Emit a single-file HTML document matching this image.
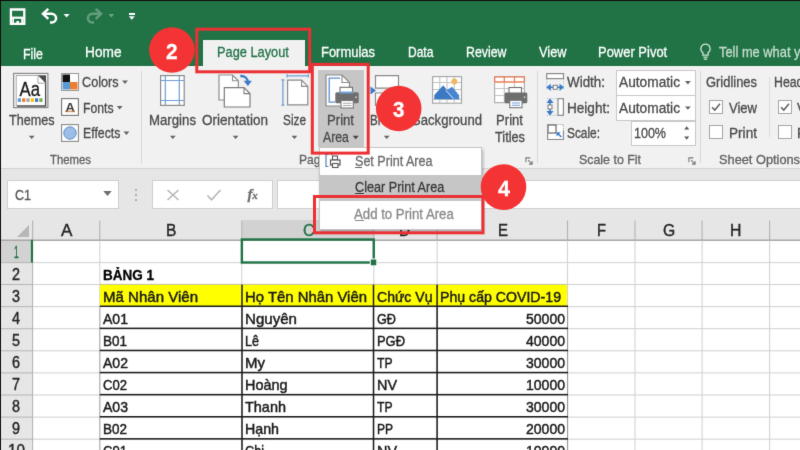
<!DOCTYPE html>
<html lang="vi">
<head>
<meta charset="utf-8">
<title>Excel - Add to Print Area</title>
<style>
html,body{margin:0;padding:0}
body{width:800px;height:450px;overflow:hidden;position:relative;background:#fff;font-family:"Liberation Sans",sans-serif}
#app{position:absolute;left:0;top:0;width:800px;height:450px;overflow:hidden;background:#fff;filter:url(#bl)}
.t{position:absolute;white-space:pre;transform-origin:0 50%;-webkit-text-stroke:0.3px}
.a{position:absolute}
.vl{position:absolute;width:1px;background:#d9d9d9}
.hl{position:absolute;height:1px;background:#d9d9d9}
.dv{position:absolute;width:1.2px;background:#303030}
.dh{position:absolute;height:1.2px;background:#303030}
.sep{position:absolute;width:1px;background:#d6d6d6}
.car{position:absolute;width:0;height:0;margin-left:0.8px;border-left:3px solid transparent;border-right:3px solid transparent;border-top:3.5px solid #666}
.box{position:absolute;background:#fff;border:1px solid #c8c8c8;box-sizing:border-box}
.chk{position:absolute;width:14px;height:14px;background:#fff;border:1px solid #a6a6a6;box-sizing:border-box}
.rr{position:absolute;border:3px solid #ec3034;box-sizing:border-box}
.circ{position:absolute;width:45.6px;height:45.6px;border-radius:50%;background:#f43434}
svg{position:absolute;overflow:visible}
</style>
</head>
<body>
<svg width="0" height="0" style="position:absolute"><defs><filter id="bl" x="0" y="0" width="100%" height="100%" color-interpolation-filters="sRGB"><feConvolveMatrix order="3" kernelMatrix="0.0081 0.0738 0.0081 0.0738 0.6724 0.0738 0.0081 0.0738 0.0081" divisor="1" edgeMode="duplicate" preserveAlpha="true"/></filter></defs></svg>
<div id="app">

<!-- ===== title bar + tabs ===== -->
<div class="a" style="left:0;top:0;width:800px;height:66px;background:#217346"></div>
<div class="a" style="left:203px;top:40px;width:102px;height:27px;background:#f1f1f1"></div>

<!-- quick access icons -->
<svg style="left:9px;top:8px" width="18" height="18" viewBox="0 0 18 18">
  <path d="M1.9 1.5h13.4v14.4h-13.400z" fill="none" stroke="#fff" stroke-width="2.3"/>
  <path d="M3 8.600h11.500v2.200h-11.500z" fill="#fff"/>
  <path d="M3.300 10h1.700v5h-1.700zM12.200 10h1.700v5h-1.700z" fill="#fff"/>
  <rect x="7.400" y="13" width="2.600" height="3" fill="#fff"/>
</svg>
<svg style="left:40px;top:7px" width="20" height="18" viewBox="0 0 20 18">
  <path d="M3.500 6.800h8a4.600 4.600 0 0 1 4.600 4.400a4.300 4.300 0 0 1-4.300 4.300h-1.800" fill="none" stroke="#fff" stroke-width="2.500"/>
  <path d="M8.300 1.800L3 6.800l5.300 5" fill="none" stroke="#fff" stroke-width="2.500"/>
</svg>
<svg style="left:83.500px;top:7px;opacity:.3" width="20" height="18" viewBox="0 0 20 18">
  <path d="M16.500 6.800h-8a4.600 4.600 0 0 0-4.600 4.400a4.300 4.300 0 0 0 4.300 4.300h1.800" fill="none" stroke="#fff" stroke-width="2.500"/>
  <path d="M11.700 1.800l5.300 5l-5.300 5" fill="none" stroke="#fff" stroke-width="2.500"/>
</svg>
<div class="a" style="left:128.800px;top:13px;width:6.500px;height:1.700px;background:#fff"></div>

<!-- bulb -->
<svg style="left:699px;top:43px" width="13" height="18" viewBox="0 0 13 18">
  <path d="M6.5 1.2a4.6 4.6 0 0 0-2.6 8.4v2.6h5.2v-2.6a4.6 4.6 0 0 0-2.6-8.4z" fill="none" stroke="#cfe3d6" stroke-width="1.3"/>
  <path d="M4.3 14.2h4.4M4.8 16.2h3.4" stroke="#cfe3d6" stroke-width="1.2"/>
</svg>

<!-- ===== ribbon ===== -->
<div class="a" style="left:0;top:66px;width:800px;height:103px;background:#f1f1f1"></div>
<div class="a" style="left:0;top:168px;width:800px;height:1px;background:#d2d2d2"></div>
<div class="a" style="left:0;top:169px;width:800px;height:52px;background:#e6e6e6"></div>

<!-- print area pressed bg -->
<div class="a" style="left:318.200px;top:69.800px;width:46.300px;height:77.500px;background:#c6c6c6"></div>

<!-- separators -->
<div class="sep" style="left:141.200px;top:71px;height:92px"></div>
<div class="sep" style="left:537px;top:71px;height:92px"></div>
<div class="sep" style="left:700px;top:71px;height:92px"></div>
<div class="sep" style="left:769px;top:77px;height:60px;background:#dcdcdc"></div>

<!-- Themes icon -->
<svg style="left:13px;top:73px" width="36" height="35" viewBox="0 0 36 35">
  <rect x="0.600" y="0.400" width="34.300" height="34.200" fill="#f4f4f4" stroke="#8a8a8a" stroke-width="1.200"/>
  <rect x="3.200" y="2.600" width="29.300" height="30" fill="#fff" stroke="#9a9a9a" stroke-width="0.800"/>
  <path d="M32.600 8v25.200H4" fill="none" stroke="#4a4a4a" stroke-width="1.300"/>
  <path d="M25 2.400h8v8z" fill="#4a4a4a"/>
  <path d="M25 2.600v7.600h7.800" fill="none" stroke="#9a9a9a" stroke-width=".9"/>
  <text x="6.600" y="22.600" font-family="Liberation Sans, sans-serif" font-size="19.500" fill="#1a1a1a" stroke="#1a1a1a" stroke-width=".3" textLength="20.500" lengthAdjust="spacingAndGlyphs">Aa</text>
  <rect x="4.800" y="25.300" width="3.200" height="3.600" fill="#5b9bd5"/>
  <rect x="9.100" y="25.300" width="3.200" height="3.600" fill="#ed7d31"/>
  <rect x="13.400" y="25.300" width="3.200" height="3.600" fill="#a5a5a5"/>
  <rect x="17.700" y="25.300" width="3.200" height="3.600" fill="#ffc000"/>
  <rect x="22" y="25.300" width="3.200" height="3.600" fill="#4472c4"/>
  <rect x="26.300" y="25.300" width="3.200" height="3.600" fill="#70ad47"/>
</svg>
<!-- Colors icon -->
<svg style="left:61px;top:73px" width="18" height="18" viewBox="0 0 18 18">
  <rect x="0.5" y="0.5" width="17" height="17" fill="#fff" stroke="#9a9a9a"/>
  <rect x="1.5" y="1.5" width="7.5" height="7.5" fill="#111"/>
  <rect x="9" y="1.5" width="7.5" height="7.5" fill="#fff"/>
  <rect x="1.5" y="9" width="7.5" height="7.5" fill="#5b9bd5"/>
  <rect x="9" y="9" width="7.5" height="7.5" fill="#ed7d31"/>
</svg>
<!-- Fonts icon -->
<svg style="left:61px;top:98px" width="18" height="18" viewBox="0 0 18 18">
  <rect x="0.6" y="0.6" width="16.8" height="16.8" fill="#fff" stroke="#777" stroke-width="1.1"/>
  <text x="4.2" y="14.3" font-family="Liberation Sans, sans-serif" font-size="13.5" font-weight="bold" fill="#3a3a3a">A</text>
  <rect x="4" y="12.6" width="10" height="1.6" fill="#c8793c" opacity=".75"/>
</svg>
<!-- Effects icon -->
<svg style="left:61px;top:124px" width="18" height="18" viewBox="0 0 18 18">
  <rect x="0.6" y="0.6" width="16.8" height="16.8" fill="#fff" stroke="#8a8a8a" stroke-width="1.1"/>
  <circle cx="9" cy="9" r="6.2" fill="#9dbde6" stroke="#5b8fd0" stroke-width="1"/>
</svg>
<!-- Margins icon -->
<svg style="left:160px;top:75px" width="25" height="31" viewBox="0 0 25 31">
  <rect x="0.6" y="0.6" width="23.6" height="29.8" fill="#fff" stroke="#8a8a8a" stroke-width="1.2"/>
  <path d="M5.3 1v29M19.3 1v29M1 5.5h23M1 25.5h23" stroke="#6f9fd8" stroke-width="1.2" fill="none"/>
</svg>
<!-- Orientation icon -->
<svg style="left:218px;top:73.600px" width="34" height="35" viewBox="0 0 34 35">
  <path d="M1 1h13.500l5.800 5.800v19.200H1z" fill="#fff" stroke="#8e8e8e" stroke-width="1.200"/>
  <path d="M14.500 1v5.800h5.800" fill="none" stroke="#8e8e8e" stroke-width="1.100"/>
  <path d="M6.300 13.600h19.700l6 6v13.400H6.300z" fill="#fff" stroke="#7c7c7c" stroke-width="1.200"/>
  <path d="M26 13.600v6h6" fill="none" stroke="#7c7c7c" stroke-width="1.100"/>
  <path d="M22.300 2c4.800-.2 7.800 2.600 7.600 7" fill="none" stroke="#3a7bc8" stroke-width="2.300"/>
  <path d="M25.600 6.800l4.300 5.200l4-5.200z" fill="#3a7bc8"/>
</svg>
<!-- Size icon -->
<svg style="left:280.600px;top:73.800px" width="28" height="33" viewBox="0 0 28 33">
  <path d="M6.600 6.200h14l6.200 6.200v18.400h-20.200z" fill="#fff" stroke="#8a8a8a" stroke-width="1.200"/>
  <path d="M20.600 6.200v6.200h6.200" fill="none" stroke="#8a8a8a" stroke-width="1.100"/>
  <path d="M6 1.900h21.300M6 .3v3.200M27.300 .3v3.200" stroke="#6f9fd8" stroke-width="1.300" fill="none"/>
  <path d="M1.900 5.800v25.400M.3 5.800h3.200M.3 31.200h3.200" stroke="#6f9fd8" stroke-width="1.300" fill="none"/>
</svg>
<!-- Print Area icon -->
<svg style="left:325px;top:74px" width="35" height="36" viewBox="0 0 35 36">
  <path d="M1 1h16l7.5 7.5v23.5H1z" fill="#fff" stroke="#8a8a8a" stroke-width="1.2"/>
  <path d="M17 1v7.5h7.5" fill="none" stroke="#8a8a8a" stroke-width="1.1"/>
  <path d="M15 4.200H4.200v24H10" fill="none" stroke="#5b8fd0" stroke-width="1.300"/>
  <rect x="15" y="13.300" width="12.500" height="6" fill="#fff" stroke="#707070" stroke-width="1.1"/>
  <rect x="10.300" y="18.200" width="23.400" height="11" rx="1.500" fill="#6e6e6e"/>
  <rect x="14.500" y="17.600" width="13.500" height="2" fill="#6f9fd8"/>
  <rect x="16" y="26.500" width="12.300" height="7.500" fill="#fff" stroke="#777" stroke-width="1.1"/>
  <path d="M18 29.300h8.500M18 31.500h8.500" stroke="#aaa" stroke-width="1"/>
  <rect x="30.300" y="22.500" width="1.500" height="1.500" fill="#ddd"/>
</svg>
<!-- Breaks icon -->
<svg style="left:370px;top:75px" width="30" height="31" viewBox="0 0 30 31">
  <path d="M5.5 0.6h23v12.5h-23z" fill="#fff" stroke="#8a8a8a" stroke-width="1.2"/>
  <path d="M5.5 18h23v12.4h-23z" fill="#fff" stroke="#8a8a8a" stroke-width="1.2"/>
  <path d="M0.5 11.5l5.5 4l-5.5 4z" fill="#3a7bc8"/>
</svg>
<!-- Background icon -->
<svg style="left:432.300px;top:76.400px" width="30" height="28" viewBox="0 0 30 28">
  <rect x="0.600" y="0.600" width="28.900" height="26.600" fill="#fff" stroke="#a8a8a8" stroke-width="1.200"/>
  <path d="M1 6.500h28M1 13.500h28M1 23.400h28M7.800 1v26M15 1v26M22.300 1v26" stroke="#c4c4c4" stroke-width="1.100" fill="none"/>
  <circle cx="22.300" cy="5.400" r="3" fill="#f0b862"/>
  <path d="M2.300 23.200v-4.200l9-9.800l10.200 14z" fill="#3b79c4"/>
  <path d="M14 14.500l6.200-3.800l6.900 8.600v3.900h-7z" fill="#4a86d0"/>
  <path d="M13.800 14.300l7.500 8.300" stroke="#e8eef7" stroke-width=".9" fill="none"/>
</svg>
<!-- Print Titles icon -->
<svg style="left:494px;top:76.200px" width="34" height="33" viewBox="0 0 34 33">
  <rect x="0.600" y="0.600" width="29.800" height="26" fill="#fff" stroke="#b0b0b0" stroke-width="1.200"/>
  <path d="M1 12.500h29.500M1 19.500h29.500M10.300 6v20.500M20.500 6v20.500" stroke="#c4c4c4" stroke-width="1.100" fill="none"/>
  <path d="M0.600 0.800h29.800M0.600 6h29.800M10.300 1v5M20.500 1v5M0.600 0.500v5.500M30.400 0.500v5.500" stroke="#e9805a" stroke-width="1.300" fill="none"/>
  <rect x="15" y="11.500" width="12.500" height="6" fill="#fff" stroke="#707070" stroke-width="1.100"/>
  <rect x="10.500" y="16.500" width="22.800" height="10.800" rx="1.500" fill="#6e6e6e"/>
  <rect x="15.800" y="24.300" width="12.200" height="7.400" fill="#fff" stroke="#777" stroke-width="1.100"/>
  <path d="M18 27h8M18 29.300h8" stroke="#6f9fd8" stroke-width="1.100"/>
  <rect x="29.800" y="20.500" width="1.500" height="1.500" fill="#ddd"/>
</svg>
<!-- Width icon -->
<svg style="left:546px;top:73px" width="19" height="19" viewBox="0 0 19 19">
  <rect x="0.700" y="0.600" width="16.800" height="5" fill="#fff" stroke="#8a8a8a" stroke-width="1.200"/>
  <path d="M0.700 6v11M17.500 6v11" stroke="#9db7d8" stroke-width="1" stroke-dasharray="1 1.300"/>
  <path d="M3 14.300h12.500" stroke="#3a7bc8" stroke-width="1.600"/>
  <path d="M0.300 14.300l4.500-3.600v7.200zM18 14.300l-4.500-3.600v7.200z" fill="#3a7bc8"/>
  <rect x="7.200" y="12.300" width="4" height="4" fill="#fff" stroke="#7a7a7a" stroke-width="1"/>
</svg>
<!-- Height icon -->
<svg style="left:546px;top:98px" width="19" height="19" viewBox="0 0 19 19">
  <rect x="12" y="0.700" width="5.400" height="16.600" fill="#fff" stroke="#8a8a8a" stroke-width="1.200"/>
  <path d="M1 0.700h10.500M1 17.300h10.500" stroke="#9db7d8" stroke-width="1" stroke-dasharray="1 1.300"/>
  <path d="M4 3v12" stroke="#3a7bc8" stroke-width="1.600"/>
  <path d="M4 0.500l-3.600 4.500h7.200zM4 17.600l-3.600-4.500h7.200z" fill="#3a7bc8"/>
  <rect x="2" y="7" width="4" height="4" fill="#fff" stroke="#7a7a7a" stroke-width="1"/>
</svg>
<!-- Scale icon -->
<svg style="left:546.500px;top:123.800px" width="18" height="17" viewBox="0 0 18 17">
  <rect x="0.600" y="0.600" width="15.800" height="14.800" fill="#fff" stroke="#9a9a9a" stroke-width="1" stroke-dasharray="1.200 1.200"/>
  <path d="M0.600 9.500v6h15.800v-9" fill="none" stroke="#8a8a8a" stroke-width="1.100"/>
  <rect x="1" y="1" width="8" height="8" fill="#fff" stroke="#666" stroke-width="1.200"/>
  <path d="M14.300 13l-3.600-3.600" fill="none" stroke="#3a7bc8" stroke-width="1.500"/>
  <path d="M9.500 8.200h4.200l-4.200 4.200z" fill="#3a7bc8"/>
</svg>




<!-- combos -->
<div class="box" style="left:616px;top:70px;width:80px;height:26px"></div>
<div class="box" style="left:616px;top:95px;width:80px;height:26px"></div>
<div class="box" style="left:631px;top:121px;width:65px;height:25px"></div>

<!-- checkboxes -->
<div class="chk" style="left:709px;top:100px"></div>
<div class="chk" style="left:709px;top:125px"></div>
<div class="chk" style="left:778px;top:100px"></div>
<div class="chk" style="left:778px;top:125px"></div>
<svg style="left:709px;top:100px" width="14" height="14" viewBox="0 0 14 14"><path d="M3 7.200l2.800 2.900l5.200-6.300" fill="none" stroke="#606060" stroke-width="1.500"/></svg>
<svg style="left:778px;top:100px" width="14" height="14" viewBox="0 0 14 14"><path d="M3 7.200l2.800 2.900l5.200-6.300" fill="none" stroke="#606060" stroke-width="1.500"/></svg>

<!-- dialog launchers -->
<svg style="left:525px;top:156.500px" width="8" height="8" viewBox="0 0 9 9"><path d="M1 6V1h5" fill="none" stroke="#777" stroke-width="1.2"/><path d="M3.5 3.5L8 8M8 4.5V8H4.5" fill="none" stroke="#777" stroke-width="1.2"/></svg>
<svg style="left:688px;top:156.500px" width="8" height="8" viewBox="0 0 9 9"><path d="M1 6V1h5" fill="none" stroke="#777" stroke-width="1.2"/><path d="M3.5 3.5L8 8M8 4.5V8H4.5" fill="none" stroke="#777" stroke-width="1.2"/></svg>

<!-- ===== formula bar ===== -->
<div class="box" style="left:6.5px;top:180.3px;width:112px;height:28.4px;border-color:#cfcfcf"></div>
<div class="a" style="left:134.5px;top:189px;width:2px;height:2px;background:#b0b0b0"></div>
<div class="a" style="left:134.5px;top:194px;width:2px;height:2px;background:#b0b0b0"></div>
<div class="a" style="left:134.5px;top:199px;width:2px;height:2px;background:#b0b0b0"></div>
<div class="box" style="left:152.3px;top:180.3px;width:121.2px;height:28.4px;border-color:#cfcfcf"></div>
<div class="box" style="left:277.3px;top:180.3px;width:530px;height:28.4px;border-color:#cfcfcf"></div>
<svg style="left:166px;top:189px" width="14" height="12" viewBox="0 0 14 12"><path d="M1.5 1l11 10M12.5 1l-11 10" stroke="#b4b4b4" stroke-width="1.5" fill="none"/></svg>
<svg style="left:206px;top:189px" width="16" height="12" viewBox="0 0 16 12"><path d="M1.5 6.5l4 4.3L14.5 1" stroke="#b4b4b4" stroke-width="1.5" fill="none"/></svg>
<span class="t" style="left:247.500px;top:185px;font-family:'Liberation Serif',serif;font-style:italic;font-size:15px;line-height:19px;color:#707070;font-weight:bold;letter-spacing:-.3px">f<span style="font-size:11px">x</span></span>

<!-- ===== grid ===== -->
<div class="a" style="left:0;top:220px;width:800px;height:21px;background:#e6e6e6"></div>
<div class="a" style="left:0;top:241px;width:32px;height:209px;background:#e6e6e6"></div>
<div class="a" style="left:32.5px;top:241px;width:768px;height:209px;background:#fff"></div>
<!-- selected headers -->
<div class="a" style="left:241.800px;top:220px;width:132px;height:20px;background:#d2d2d2"></div>

<div class="a" style="left:0;top:241px;width:32px;height:22px;background:#d2d2d2"></div>

<svg style="left:16px;top:224px" width="14" height="14" viewBox="0 0 14 14"><path d="M13 1v12H1z" fill="#b7b7b7"/></svg>
<div class="a" style="left:0;top:239.600px;width:800px;height:1px;background:#ababab"></div>

<svg style="left:0;top:0" width="800" height="450" viewBox="0 0 800 450">
<rect x="99.25" y="240" width="1.1" height="210" fill="#d4d4d4"/>
<rect x="241.25" y="240" width="1.1" height="210" fill="#d4d4d4"/>
<rect x="373.25" y="240" width="1.1" height="210" fill="#d4d4d4"/>
<rect x="436.55" y="240" width="1.1" height="210" fill="#d4d4d4"/>
<rect x="566.95" y="240" width="1.1" height="210" fill="#d4d4d4"/>
<rect x="634.45" y="240" width="1.1" height="210" fill="#d4d4d4"/>
<rect x="701.55" y="240" width="1.1" height="210" fill="#d4d4d4"/>
<rect x="769.05" y="240" width="1.1" height="210" fill="#d4d4d4"/>
<rect x="99.25" y="220.5" width="1.1" height="19.5" fill="#b4b4b4"/>
<rect x="241.25" y="220.5" width="1.1" height="19.5" fill="#b4b4b4"/>
<rect x="373.25" y="220.5" width="1.1" height="19.5" fill="#b4b4b4"/>
<rect x="436.55" y="220.5" width="1.1" height="19.5" fill="#b4b4b4"/>
<rect x="566.95" y="220.5" width="1.1" height="19.5" fill="#b4b4b4"/>
<rect x="634.45" y="220.5" width="1.1" height="19.5" fill="#b4b4b4"/>
<rect x="701.55" y="220.5" width="1.1" height="19.5" fill="#b4b4b4"/>
<rect x="769.05" y="220.5" width="1.1" height="19.5" fill="#b4b4b4"/>
<rect x="33" y="262.05" width="767" height="1.1" fill="#d4d4d4"/>
<rect x="0" y="262.05" width="33" height="1.1" fill="#b9b9b9"/>
<rect x="33" y="283.95" width="767" height="1.1" fill="#d4d4d4"/>
<rect x="0" y="283.95" width="33" height="1.1" fill="#b9b9b9"/>
<rect x="33" y="306.05" width="767" height="1.1" fill="#d4d4d4"/>
<rect x="0" y="306.05" width="33" height="1.1" fill="#b9b9b9"/>
<rect x="33" y="328.15" width="767" height="1.1" fill="#d4d4d4"/>
<rect x="0" y="328.15" width="33" height="1.1" fill="#b9b9b9"/>
<rect x="33" y="350.25" width="767" height="1.1" fill="#d4d4d4"/>
<rect x="0" y="350.25" width="33" height="1.1" fill="#b9b9b9"/>
<rect x="33" y="372.35" width="767" height="1.1" fill="#d4d4d4"/>
<rect x="0" y="372.35" width="33" height="1.1" fill="#b9b9b9"/>
<rect x="33" y="394.45" width="767" height="1.1" fill="#d4d4d4"/>
<rect x="0" y="394.45" width="33" height="1.1" fill="#b9b9b9"/>
<rect x="33" y="416.55" width="767" height="1.1" fill="#d4d4d4"/>
<rect x="0" y="416.55" width="33" height="1.1" fill="#b9b9b9"/>
<rect x="33" y="438.65" width="767" height="1.1" fill="#d4d4d4"/>
<rect x="0" y="438.65" width="33" height="1.1" fill="#b9b9b9"/>
<rect x="32.05" y="220.5" width="1.1" height="230" fill="#b4b4b4"/>
<rect x="0" y="239.5" width="800" height="1.1" fill="#a6a6a6"/>
<rect x="30.900" y="239.800" width="2.100" height="22.800" fill="#217346"/>
</svg>

<!-- yellow header row -->
<div class="a" style="left:99.800px;top:284.600px;width:467.600px;height:22px;background:#ffff00"></div>

<svg style="left:0;top:0" width="800" height="450" viewBox="0 0 800 450">
<rect x="99.8" y="283.9" width="467.7" height="1.1" fill="#c9c98f"/>
<rect x="241.25" y="284.6" width="1.5" height="166" fill="#1c1c1c"/>
<rect x="372.75" y="284.6" width="1.5" height="166" fill="#1c1c1c"/>
<rect x="436.35" y="284.6" width="1.5" height="166" fill="#1c1c1c"/>
<rect x="99.3" y="306.5" width="1" height="144" fill="#b0b0b0"/>
<rect x="567" y="306.5" width="1.1" height="144" fill="#9a9a9a"/>
<rect x="99.8" y="305.50" width="468.2" height="1.5" fill="#1c1c1c"/>
<rect x="99.8" y="327.60" width="468.2" height="1.5" fill="#1c1c1c"/>
<rect x="99.8" y="349.70" width="468.2" height="1.5" fill="#1c1c1c"/>
<rect x="99.8" y="371.80" width="468.2" height="1.5" fill="#1c1c1c"/>
<rect x="99.8" y="393.90" width="468.2" height="1.5" fill="#1c1c1c"/>
<rect x="99.8" y="416.00" width="468.2" height="1.5" fill="#1c1c1c"/>
<rect x="99.8" y="438.10" width="468.2" height="1.5" fill="#1c1c1c"/>
</svg>

<!-- selection -->
<svg style="left:0;top:0" width="800" height="450" viewBox="0 0 800 450">
  <rect x="241.850" y="239.500" width="131.900" height="23" fill="none" stroke="#217346" stroke-width="2.400"/>
  <rect x="369.800" y="258.500" width="7.400" height="7.600" fill="#fff"/>
  <rect x="370.800" y="259.500" width="5.500" height="5.800" fill="#217346"/>
</svg>

<!-- carets -->
<svg style="left:0;top:0" width="800" height="450" viewBox="0 0 800 450">
<polygon points="63.60,14.00 69.60,14.00 66.60,17.50" fill="#fff"/>
<polygon points="108.60,14.00 114.20,14.00 111.40,17.40" fill="#fff" opacity="0.35"/>
<polygon points="128.80,16.20 134.80,16.20 131.80,19.80" fill="#fff"/>
<polygon points="28.80,135.70 34.60,135.70 31.70,139.10" fill="#646464"/>
<polygon points="169.90,135.70 175.70,135.70 172.80,139.10" fill="#646464"/>
<polygon points="232.70,135.70 238.50,135.70 235.60,139.10" fill="#646464"/>
<polygon points="291.50,135.70 297.30,135.70 294.40,139.10" fill="#646464"/>
<polygon points="383.80,135.70 389.60,135.70 386.70,139.10" fill="#646464"/>
<polygon points="352.70,135.80 358.70,135.80 355.70,139.30" fill="#444"/>
<polygon points="122.10,80.50 127.90,80.50 125.00,83.90" fill="#646464"/>
<polygon points="116.80,106.00 122.60,106.00 119.70,109.40" fill="#646464"/>
<polygon points="123.50,131.50 129.30,131.50 126.40,134.90" fill="#646464"/>
<polygon points="685.00,81.00 690.80,81.00 687.90,84.40" fill="#646464"/>
<polygon points="685.00,106.40 690.80,106.40 687.90,109.80" fill="#646464"/>
<polygon points="684.20,129.50 689.20,129.50 686.70,126.30" fill="#555"/>
<polygon points="684.20,136.50 689.20,136.50 686.70,139.70" fill="#555"/>
<polygon points="103.30,191.00 111.70,191.00 107.50,195.90" fill="#6e6e6e"/>
</svg>
<span class="t" style="left:23.30px;top:46px;font-size:14.3px;line-height:17px;color:#ffffff;transform:scaleX(0.8635);">File</span>
<span class="t" style="left:85.00px;top:44px;font-size:14.3px;line-height:17px;color:#ffffff;transform:scaleX(0.9570);">Home</span>
<span class="t" style="left:217.00px;top:44px;font-size:14.3px;line-height:17px;color:#217346;transform:scaleX(0.8942);">Page Layout</span>
<span class="t" style="left:321.00px;top:44px;font-size:14.3px;line-height:17px;color:#ffffff;transform:scaleX(0.9061);">Formulas</span>
<span class="t" style="left:407.80px;top:44px;font-size:14.3px;line-height:17px;color:#ffffff;transform:scaleX(0.8410);">Data</span>
<span class="t" style="left:466.00px;top:44px;font-size:14.3px;line-height:17px;color:#ffffff;transform:scaleX(0.8637);">Review</span>
<span class="t" style="left:538.50px;top:44px;font-size:14.3px;line-height:17px;color:#ffffff;transform:scaleX(0.8948);">View</span>
<span class="t" style="left:597.80px;top:44px;font-size:14.3px;line-height:17px;color:#ffffff;transform:scaleX(0.9072);">Power Pivot</span>
<span class="t" style="left:718.50px;top:44px;font-size:14.3px;line-height:17px;color:#c6ddce;transform:scaleX(0.8998);">Tell me what you want to do</span>
<span class="t" style="left:8.50px;top:112px;font-size:14px;line-height:17px;color:#4a4a4a;transform:scaleX(0.8996);">Themes</span>
<span class="t" style="left:82.40px;top:74px;font-size:14px;line-height:17px;color:#4a4a4a;transform:scaleX(0.9044);">Colors</span>
<span class="t" style="left:82.60px;top:100px;font-size:14px;line-height:17px;color:#4a4a4a;transform:scaleX(0.8739);">Fonts</span>
<span class="t" style="left:82.60px;top:125px;font-size:14px;line-height:17px;color:#4a4a4a;transform:scaleX(0.8790);">Effects</span>
<span class="t" style="left:50.00px;top:152px;font-size:13.4px;line-height:16px;color:#606060;transform:scaleX(0.8475);">Themes</span>
<span class="t" style="left:149.00px;top:112px;font-size:14px;line-height:17px;color:#4a4a4a;transform:scaleX(0.9438);">Margins</span>
<span class="t" style="left:202.00px;top:112px;font-size:14px;line-height:17px;color:#4a4a4a;transform:scaleX(0.9637);">Orientation</span>
<span class="t" style="left:283.00px;top:112px;font-size:14px;line-height:17px;color:#4a4a4a;transform:scaleX(0.8445);">Size</span>
<span class="t" style="left:327.00px;top:112px;font-size:14px;line-height:17px;color:#4a4a4a;transform:scaleX(0.9376);">Print</span>
<span class="t" style="left:323.30px;top:129px;font-size:14px;line-height:17px;color:#4a4a4a;transform:scaleX(0.8756);">Area</span>
<span class="t" style="left:370.00px;top:112px;font-size:14px;line-height:17px;color:#4a4a4a;transform:scaleX(0.8261);">Breaks</span>
<span class="t" style="left:412.00px;top:112px;font-size:14px;line-height:17px;color:#4a4a4a;transform:scaleX(0.9368);">Background</span>
<span class="t" style="left:496.00px;top:112px;font-size:14px;line-height:17px;color:#4a4a4a;transform:scaleX(0.9376);">Print</span>
<span class="t" style="left:495.00px;top:129px;font-size:14px;line-height:17px;color:#4a4a4a;transform:scaleX(0.9108);">Titles</span>
<span class="t" style="left:299.00px;top:152px;font-size:13.4px;line-height:16px;color:#606060;transform:scaleX(0.9000);">Page Setup</span>
<span class="t" style="left:567.00px;top:74px;font-size:14px;line-height:17px;color:#4a4a4a;transform:scaleX(0.9575);">Width:</span>
<span class="t" style="left:567.00px;top:100px;font-size:14px;line-height:17px;color:#4a4a4a;transform:scaleX(0.9694);">Height:</span>
<span class="t" style="left:567.00px;top:125px;font-size:14px;line-height:17px;color:#4a4a4a;transform:scaleX(0.8479);">Scale:</span>
<span class="t" style="left:619.00px;top:74px;font-size:14px;line-height:17px;color:#4a4a4a;transform:scaleX(0.9799);">Automatic</span>
<span class="t" style="left:619.00px;top:100px;font-size:14px;line-height:17px;color:#4a4a4a;transform:scaleX(0.9799);">Automatic</span>
<span class="t" style="left:634.00px;top:125px;font-size:14px;line-height:17px;color:#4a4a4a;transform:scaleX(0.8935);">100%</span>
<span class="t" style="left:579.00px;top:152px;font-size:13.4px;line-height:16px;color:#606060;transform:scaleX(0.9256);">Scale to Fit</span>
<span class="t" style="left:706.00px;top:74px;font-size:14px;line-height:17px;color:#4a4a4a;transform:scaleX(0.9231);">Gridlines</span>
<span class="t" style="left:729.00px;top:100px;font-size:14px;line-height:17px;color:#4a4a4a;transform:scaleX(0.9304);">View</span>
<span class="t" style="left:729.00px;top:125px;font-size:14px;line-height:17px;color:#4a4a4a;transform:scaleX(0.9723);">Print</span>
<span class="t" style="left:774.00px;top:74px;font-size:14px;line-height:17px;color:#4a4a4a;transform:scaleX(0.8790);">Headings</span>
<span class="t" style="left:797.00px;top:100px;font-size:14px;line-height:17px;color:#4a4a4a;transform:scaleX(0.9304);">View</span>
<span class="t" style="left:797.00px;top:125px;font-size:14px;line-height:17px;color:#4a4a4a;transform:scaleX(0.9723);">Print</span>
<span class="t" style="left:719.00px;top:152px;font-size:13.4px;line-height:16px;color:#606060;transform:scaleX(0.9543);">Sheet Options</span>
<span class="t" style="left:14.80px;top:187px;font-size:14px;line-height:17px;color:#555;transform:scaleX(0.8935);">C1</span>
<span class="t" style="left:61.20px;top:220px;font-size:16.4px;line-height:20px;color:#262626;transform:scaleX(1.0423);-webkit-text-stroke:0.4px;">A</span>
<span class="t" style="left:165.80px;top:220px;font-size:16.4px;line-height:20px;color:#262626;transform:scaleX(0.9509);-webkit-text-stroke:0.4px;">B</span>
<span class="t" style="left:302.50px;top:220px;font-size:16.4px;line-height:20px;color:#217346;transform:scaleX(0.9710);-webkit-text-stroke:0.4px;">C</span>
<span class="t" style="left:399.00px;top:220px;font-size:16.4px;line-height:20px;color:#262626;transform:scaleX(0.9288);-webkit-text-stroke:0.4px;">D</span>
<span class="t" style="left:498.00px;top:220px;font-size:16.4px;line-height:20px;color:#262626;transform:scaleX(0.9143);-webkit-text-stroke:0.4px;">E</span>
<span class="t" style="left:597.20px;top:220px;font-size:16.4px;line-height:20px;color:#262626;transform:scaleX(0.8986);-webkit-text-stroke:0.4px;">F</span>
<span class="t" style="left:663.20px;top:220px;font-size:16.4px;line-height:20px;color:#262626;transform:scaleX(0.9569);-webkit-text-stroke:0.4px;">G</span>
<span class="t" style="left:730.40px;top:220px;font-size:16.4px;line-height:20px;color:#262626;transform:scaleX(0.9625);-webkit-text-stroke:0.4px;">H</span>
<span class="t" style="left:14.00px;top:243px;font-size:15.6px;line-height:19px;color:#217346;transform:scaleX(0.5410);-webkit-text-stroke:0.4px;">1</span>
<span class="t" style="left:12.30px;top:265px;font-size:15.6px;line-height:19px;color:#262626;transform:scaleX(0.9209);-webkit-text-stroke:0.4px;">2</span>
<span class="t" style="left:12.30px;top:287px;font-size:15.6px;line-height:19px;color:#262626;transform:scaleX(0.9209);-webkit-text-stroke:0.4px;">3</span>
<span class="t" style="left:12.30px;top:309px;font-size:15.6px;line-height:19px;color:#262626;transform:scaleX(0.9209);-webkit-text-stroke:0.4px;">4</span>
<span class="t" style="left:12.30px;top:331px;font-size:15.6px;line-height:19px;color:#262626;transform:scaleX(0.9209);-webkit-text-stroke:0.4px;">5</span>
<span class="t" style="left:12.30px;top:353px;font-size:15.6px;line-height:19px;color:#262626;transform:scaleX(0.9209);-webkit-text-stroke:0.4px;">6</span>
<span class="t" style="left:12.30px;top:375px;font-size:15.6px;line-height:19px;color:#262626;transform:scaleX(0.9209);-webkit-text-stroke:0.4px;">7</span>
<span class="t" style="left:12.30px;top:397px;font-size:15.6px;line-height:19px;color:#262626;transform:scaleX(0.9209);-webkit-text-stroke:0.4px;">8</span>
<span class="t" style="left:12.30px;top:419px;font-size:15.6px;line-height:19px;color:#262626;transform:scaleX(0.9209);-webkit-text-stroke:0.4px;">9</span>
<span class="t" style="left:8.00px;top:441px;font-size:15.6px;line-height:19px;color:#262626;transform:scaleX(0.9793);-webkit-text-stroke:0.4px;">10</span>
<span class="t" style="left:103.00px;top:266px;font-size:14.6px;line-height:18px;color:#000;font-weight:bold;transform:scaleX(0.9249);">BẢNG 1</span>
<span class="t" style="left:103.00px;top:288px;font-size:14.6px;line-height:18px;color:#1a1a1a;transform:scaleX(1.0302);-webkit-text-stroke:0.45px;">Mã Nhân Viên</span>
<span class="t" style="left:245.00px;top:288px;font-size:14.6px;line-height:18px;color:#1a1a1a;transform:scaleX(1.0205);-webkit-text-stroke:0.45px;">Họ Tên Nhân Viên</span>
<span class="t" style="left:376.50px;top:288px;font-size:14.6px;line-height:18px;color:#1a1a1a;transform:scaleX(0.9629);-webkit-text-stroke:0.45px;">Chức Vụ</span>
<span class="t" style="left:440.00px;top:288px;font-size:14.6px;line-height:18px;color:#1a1a1a;transform:scaleX(0.9686);-webkit-text-stroke:0.45px;">Phụ cấp COVID-19</span>
<span class="t" style="left:103.00px;top:310px;font-size:14.6px;line-height:18px;color:#1a1a1a;transform:scaleX(0.9627);-webkit-text-stroke:0.45px;">A01</span>
<span class="t" style="left:245.00px;top:310px;font-size:14.6px;line-height:18px;color:#1a1a1a;transform:scaleX(1.0335);-webkit-text-stroke:0.45px;">Nguyên</span>
<span class="t" style="left:376.50px;top:310px;font-size:14.6px;line-height:18px;color:#1a1a1a;transform:scaleX(0.8680);-webkit-text-stroke:0.45px;">GĐ</span>
<span class="t" style="left:526.00px;top:310px;font-size:14.6px;line-height:18px;color:#1a1a1a;transform:scaleX(0.9607);-webkit-text-stroke:0.45px;">50000</span>
<span class="t" style="left:103.00px;top:332px;font-size:14.6px;line-height:18px;color:#1a1a1a;transform:scaleX(0.9242);-webkit-text-stroke:0.45px;">B01</span>
<span class="t" style="left:245.00px;top:332px;font-size:14.6px;line-height:18px;color:#1a1a1a;transform:scaleX(0.8624);-webkit-text-stroke:0.45px;">Lê</span>
<span class="t" style="left:376.50px;top:332px;font-size:14.6px;line-height:18px;color:#1a1a1a;transform:scaleX(0.8854);-webkit-text-stroke:0.45px;">PGĐ</span>
<span class="t" style="left:526.00px;top:332px;font-size:14.6px;line-height:18px;color:#1a1a1a;transform:scaleX(0.9607);-webkit-text-stroke:0.45px;">40000</span>
<span class="t" style="left:103.00px;top:354px;font-size:14.6px;line-height:18px;color:#1a1a1a;transform:scaleX(0.9627);-webkit-text-stroke:0.45px;">A02</span>
<span class="t" style="left:245.00px;top:354px;font-size:14.6px;line-height:18px;color:#1a1a1a;transform:scaleX(1.0273);-webkit-text-stroke:0.45px;">My</span>
<span class="t" style="left:376.50px;top:354px;font-size:14.6px;line-height:18px;color:#1a1a1a;transform:scaleX(0.8308);-webkit-text-stroke:0.45px;">TP</span>
<span class="t" style="left:526.00px;top:354px;font-size:14.6px;line-height:18px;color:#1a1a1a;transform:scaleX(0.9607);-webkit-text-stroke:0.45px;">30000</span>
<span class="t" style="left:103.00px;top:376px;font-size:14.6px;line-height:18px;color:#1a1a1a;transform:scaleX(0.8961);-webkit-text-stroke:0.45px;">C02</span>
<span class="t" style="left:245.00px;top:376px;font-size:14.6px;line-height:18px;color:#1a1a1a;transform:scaleX(0.9880);-webkit-text-stroke:0.45px;">Hoàng</span>
<span class="t" style="left:376.50px;top:376px;font-size:14.6px;line-height:18px;color:#1a1a1a;transform:scaleX(0.9861);-webkit-text-stroke:0.45px;">NV</span>
<span class="t" style="left:526.00px;top:376px;font-size:14.6px;line-height:18px;color:#1a1a1a;transform:scaleX(0.9607);-webkit-text-stroke:0.45px;">10000</span>
<span class="t" style="left:103.00px;top:398px;font-size:14.6px;line-height:18px;color:#1a1a1a;transform:scaleX(0.9627);-webkit-text-stroke:0.45px;">A03</span>
<span class="t" style="left:245.00px;top:398px;font-size:14.6px;line-height:18px;color:#1a1a1a;transform:scaleX(0.9906);-webkit-text-stroke:0.45px;">Thanh</span>
<span class="t" style="left:376.50px;top:398px;font-size:14.6px;line-height:18px;color:#1a1a1a;transform:scaleX(0.8308);-webkit-text-stroke:0.45px;">TP</span>
<span class="t" style="left:526.00px;top:398px;font-size:14.6px;line-height:18px;color:#1a1a1a;transform:scaleX(0.9607);-webkit-text-stroke:0.45px;">30000</span>
<span class="t" style="left:103.00px;top:420px;font-size:14.6px;line-height:18px;color:#1a1a1a;transform:scaleX(0.9242);-webkit-text-stroke:0.45px;">B02</span>
<span class="t" style="left:245.00px;top:420px;font-size:14.6px;line-height:18px;color:#1a1a1a;transform:scaleX(0.9745);-webkit-text-stroke:0.45px;">Hạnh</span>
<span class="t" style="left:376.50px;top:420px;font-size:14.6px;line-height:18px;color:#1a1a1a;transform:scaleX(0.8218);-webkit-text-stroke:0.45px;">PP</span>
<span class="t" style="left:526.00px;top:420px;font-size:14.6px;line-height:18px;color:#1a1a1a;transform:scaleX(0.9607);-webkit-text-stroke:0.45px;">20000</span>
<span class="t" style="left:103.00px;top:442px;font-size:14.6px;line-height:18px;color:#1a1a1a;transform:scaleX(0.8961);-webkit-text-stroke:0.45px;">C01</span>
<span class="t" style="left:245.00px;top:442px;font-size:14.6px;line-height:18px;color:#1a1a1a;transform:scaleX(0.8673);-webkit-text-stroke:0.45px;">Chi</span>
<span class="t" style="left:376.50px;top:442px;font-size:14.6px;line-height:18px;color:#1a1a1a;transform:scaleX(0.9861);-webkit-text-stroke:0.45px;">NV</span>
<span class="t" style="left:526.00px;top:442px;font-size:14.6px;line-height:18px;color:#1a1a1a;transform:scaleX(0.9607);-webkit-text-stroke:0.45px;">10000</span>

<!-- ===== dropdown menu ===== -->
<div class="a" style="left:318.500px;top:146.500px;width:163.500px;height:83px;background:#fff;border:1px solid #c6c6c6;box-sizing:border-box;box-shadow:1px 1.500px 3px rgba(0,0,0,.3)"></div>
<div class="a" style="left:319.5px;top:175px;width:162px;height:26px;background:#c6c6c6"></div>
<svg style="left:324px;top:152px" width="20" height="18" viewBox="0 0 20 18">
  <path d="M4.5 2.5H2v12h2.5" fill="none" stroke="#5a7fb0" stroke-width="1.2"/>
  <path d="M6.5 2.5h2" stroke="#777" stroke-width="1.2"/>
  <rect x="8.5" y="4" width="5" height="4" fill="#fff" stroke="#555" stroke-width="1.1"/>
  <rect x="6.5" y="8" width="9.5" height="5" fill="#fff" stroke="#555" stroke-width="1.2"/>
  <rect x="8.5" y="11.5" width="5.5" height="4" fill="#fff" stroke="#555" stroke-width="1.1"/>
</svg>
<!-- underlines for access keys -->
<div class="a" style="left:354.500px;top:167px;width:7px;height:1px;background:#6a6a6a"></div>
<div class="a" style="left:354.500px;top:193.200px;width:9px;height:1px;background:#3a3a3a"></div>
<div class="a" style="left:354.500px;top:219.800px;width:9px;height:1px;background:#8a8a8a"></div>
<span class="t" style="left:354.50px;top:153px;font-size:14px;line-height:17px;color:#6a6a6a;transform:scaleX(0.8971);">Set Print Area</span>
<span class="t" style="left:354.50px;top:179px;font-size:14px;line-height:17px;color:#3a3a3a;transform:scaleX(0.9026);">Clear Print Area</span>
<span class="t" style="left:353.90px;top:206px;font-size:14px;line-height:17px;color:#8a8a8a;transform:scaleX(0.9429);">Add to Print Area</span>

<!-- ===== red annotations ===== -->
<svg style="left:0;top:0" width="800" height="450" viewBox="0 0 800 450">
  <g fill="none" stroke="#ec3034" stroke-width="3">
    <rect x="196.800" y="29.200" width="112.900" height="42.600"/>
    <rect x="312.300" y="64.400" width="55.900" height="88.700"/>
    <rect x="314.500" y="196.500" width="168.500" height="36.300"/>
  </g>
  <g fill="#f43434">
    <circle cx="171.900" cy="50" r="22.800"/>
    <circle cx="398.700" cy="108.500" r="22.800"/>
    <circle cx="503.500" cy="187.100" r="22.800"/>
  </g>
</svg>
<span class="t" style="left:166.40px;top:38px;font-size:22.5px;line-height:27px;color:#ffffff;font-weight:bold;transform:scaleX(0.9268);">2</span>
<span class="t" style="left:393.30px;top:96px;font-size:22.5px;line-height:27px;color:#ffffff;font-weight:bold;transform:scaleX(0.9109);">3</span>
<span class="t" style="left:497.50px;top:175px;font-size:22.5px;line-height:27px;color:#ffffff;font-weight:bold;transform:scaleX(0.9508);">4</span>

<!-- dark frame edges -->
<div class="a" style="left:0;top:0;width:800px;height:1.2px;background:#101010"></div>
<div class="a" style="left:0;top:0;width:1.3px;height:450px;background:#101010"></div>
</div>
</body>
</html>
